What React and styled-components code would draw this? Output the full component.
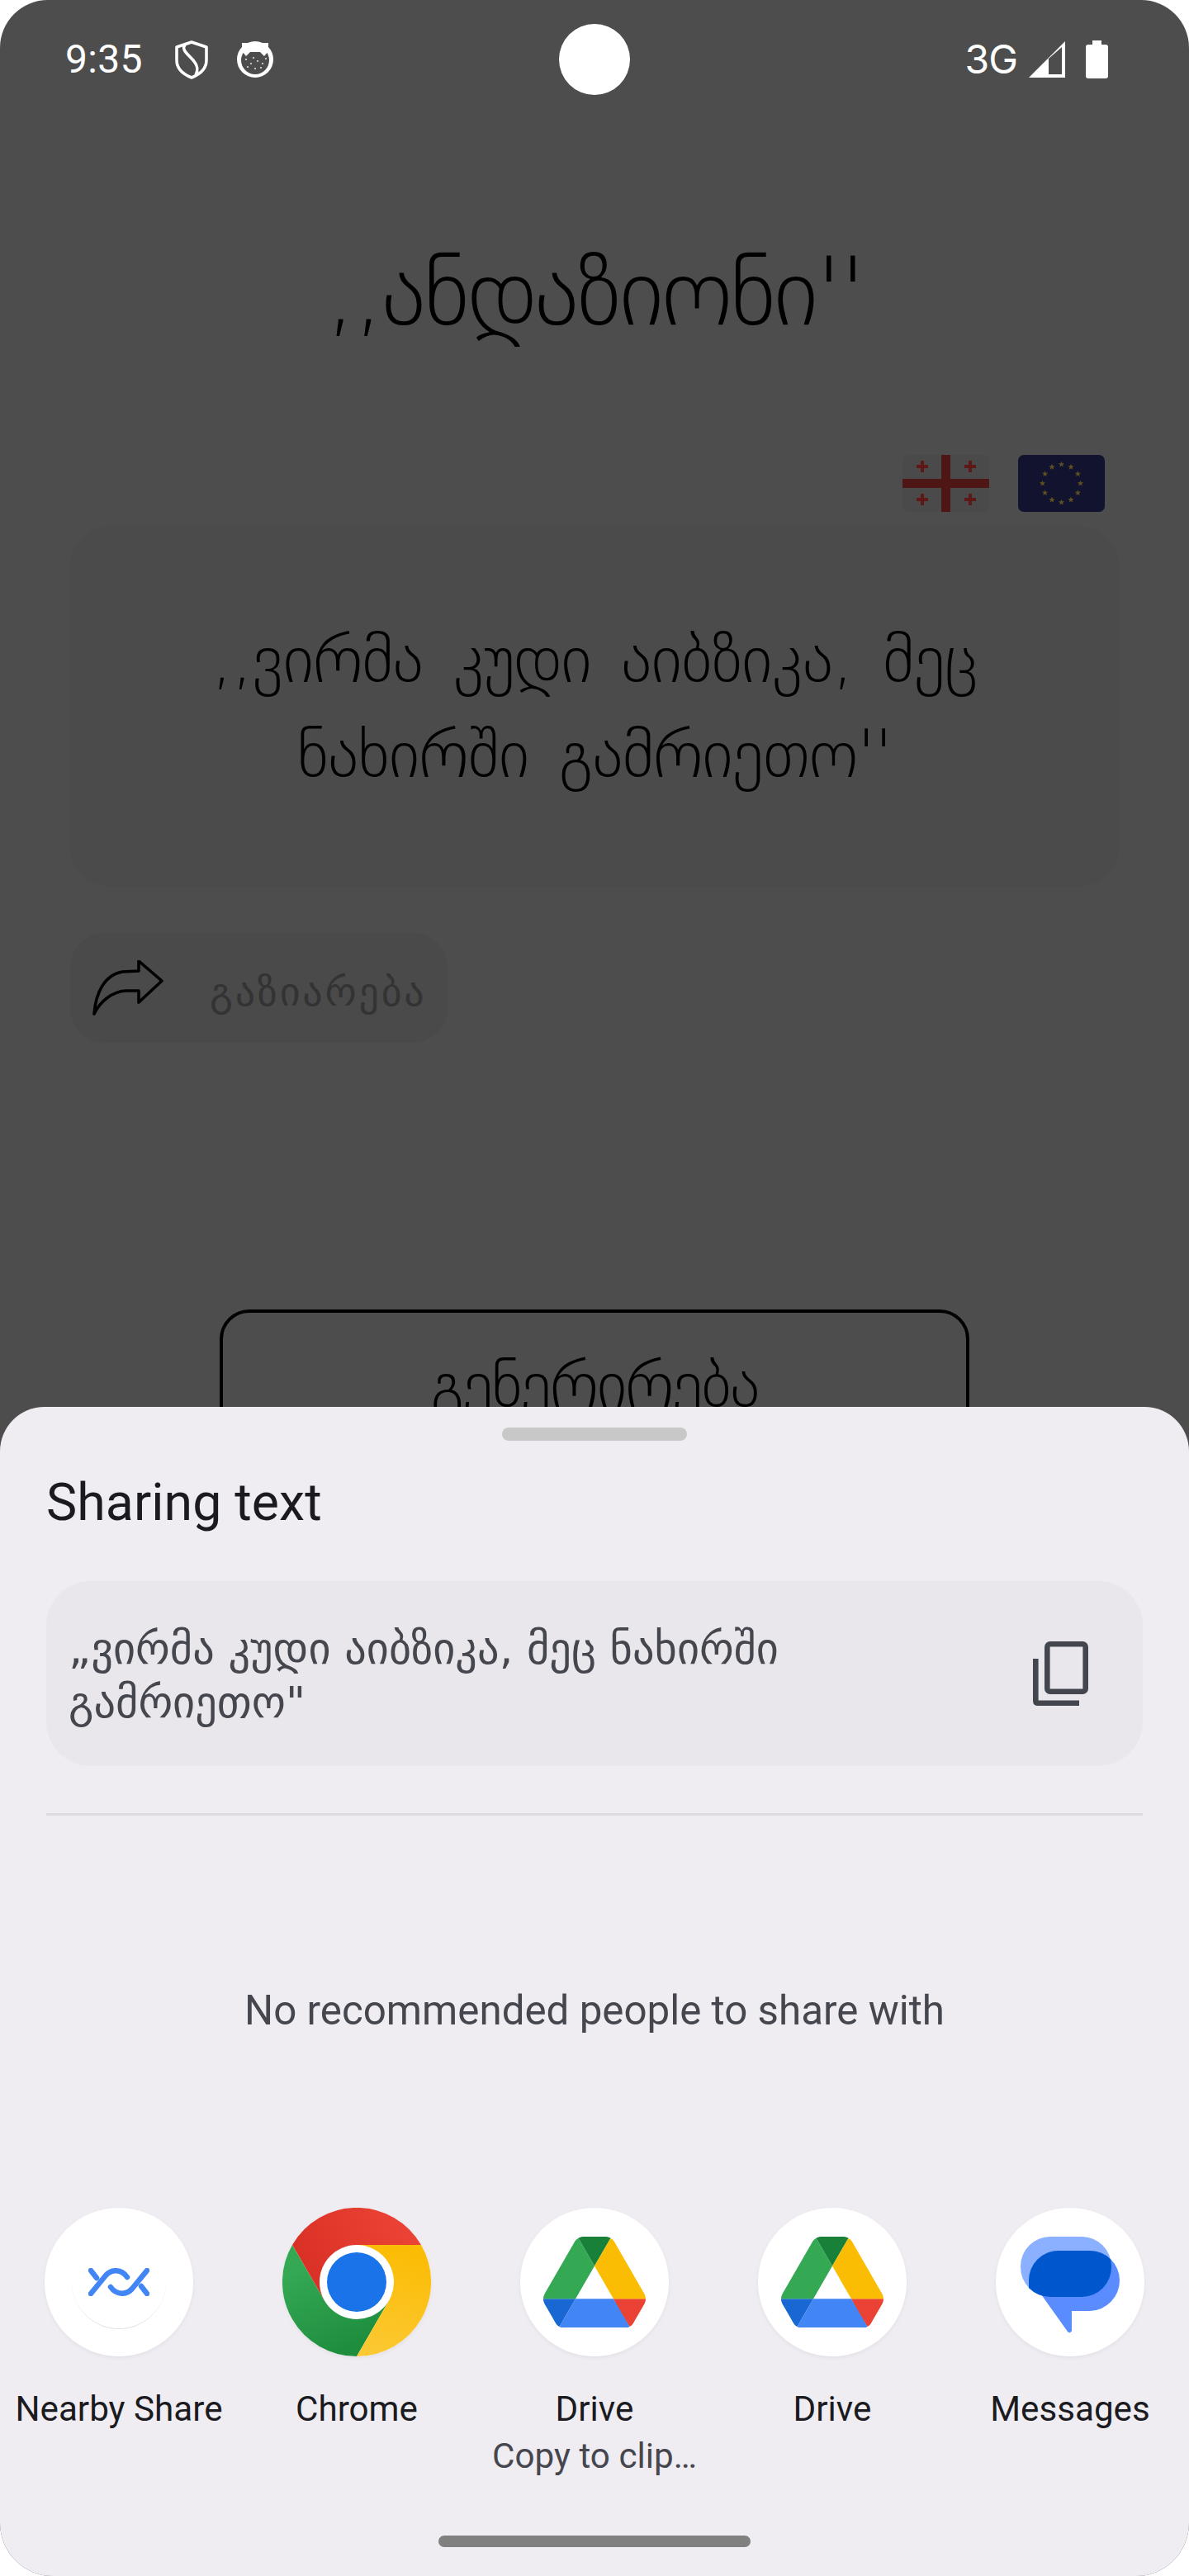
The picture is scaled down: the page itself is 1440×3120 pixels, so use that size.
import React from "react";
import styled, { createGlobalStyle } from "styled-components";

const Global = createGlobalStyle`
  html, body { margin: 0; padding: 0; background: #fff; }
  #root { width: 1440px; height: 3120px; }
`;
const georgian = `"DejaVu Sans", "Noto Sans", sans-serif`;

const Screen = styled.div`
  position: relative; width: 1440px; height: 3120px; overflow: hidden;
  background: #4d4d4d; border-radius: 58px 58px 64px 64px;
  font-family: Roboto, sans-serif;
`;
const StatusBar = styled.div`
  display: grid; grid-template-columns: 598px 86px 1fr; align-items: center;
  height: 86px; padding: 29px 98px 0 79px; color: #fff;
`;
const StatusLeft = styled.div`display: flex; align-items: center;`;
const StatusRight = styled.div`display: flex; align-items: center; justify-content: flex-end;`;
const Time = styled.span`font-size: 48px; line-height: 1; width: 133px; letter-spacing: .3px;`;
const NetLabel = styled.span`font: 400 48px/1 Inter, Roboto, sans-serif; margin-right: 14px; letter-spacing: -1px;`;
const Camera = styled.div`width: 86px; height: 86px; border-radius: 50%; background: #fff;`;

const Title = styled.h1`
  margin: 164px 0 0; text-align: center; font: 200 116px/150px ${georgian};
  color: #000; height: 150px; letter-spacing: -3px;
`;
const Flags = styled.div`
  display: flex; justify-content: flex-end; gap: 35px; padding-right: 102px; margin-top: 122px;
`;
const Flag = styled.svg`width: 105px; height: 69px; display: block; border-radius: 7px;`;
const QuoteCard = styled.div`
  margin: 17px 84px 0; height: 437px; border-radius: 52px; background: #4b4b4b;
  display: flex; align-items: center; justify-content: center; text-align: center;
  padding: 0 100px; box-sizing: border-box;
`;
const QuoteText = styled.p`
  margin: 0; font: 200 80px/115px ${georgian}; color: #000; letter-spacing: -1px; word-spacing: 12px;
`;
const SharePill = styled.div`
  margin: 56px 0 0 85px; width: 457px; height: 133px; border-radius: 42px; background: #4a4a4a;
  display: flex; align-items: center; gap: 56px; padding-left: 27px; box-sizing: border-box;
`;
const ShareLabel = styled.span`
  font: 400 48px/1 ${georgian}; color: #333; letter-spacing: 2.8px; white-space: nowrap; margin-top: 8px;
`;
const GenerateButton = styled.div`
  margin: 323px 0 0 266px; width: 908px; height: 230px; box-sizing: border-box;
  border: 4px solid #000; border-radius: 36px; display: flex; justify-content: center;
  font: 200 78px/1 ${georgian}; color: #000; padding-top: 48px; letter-spacing: -2px;
`;

const Sheet = styled.div`
  position: absolute; left: 0; right: 0; bottom: 0; height: 1416px; box-sizing: border-box;
  background: #efedf2; border-radius: 54px 54px 0 0; display: flex; flex-direction: column; align-items: stretch;
`;
const Handle = styled.div`
  width: 224px; height: 16px; border-radius: 8px; background: #c8c8c8; align-self: center; margin-top: 25px;
`;
const SheetTitle = styled.div`
  margin: 40px 0 0 56px; font-size: 62.6px; line-height: 70px; color: #1b1b1f; letter-spacing: .1px;
`;
const PreviewCard = styled.div`
  margin: 60px 56px 0; height: 224px; box-sizing: border-box; border-radius: 54px; background: #e9e7ec;
  display: flex; align-items: center; justify-content: space-between; padding: 0 66px 0 27px;
`;
const PreviewText = styled.div`
  width: 900px; padding-top: 3px; font: 400 52.4px/65px ${georgian}; color: #46464f;
`;
const Divider = styled.div`height: 3px; background: #dcdbe0; margin: 57px 56px 0;`;
const Empty = styled.div`
  margin-top: 208px; text-align: center; font-size: 49.3px; line-height: 56px; color: #46464f;
`;
const Apps = styled.div`
  display: grid; grid-template-columns: repeat(5, 288px); margin-top: 211px;
`;
const AppCell = styled.div`display: flex; flex-direction: column; align-items: center;`;
const AppIcon = styled.div`
  width: 180px; height: 180px; border-radius: 50%; background: #fff; display: flex;
  align-items: center; justify-content: center; position: relative;
  box-shadow: 0 2px 5px rgba(0,0,0,.05);
`;
const Faint = styled.div`
  position: absolute; left: 33px; top: 33px; width: 114px; height: 114px; border-radius: 50%;
  border-bottom: 1px solid #e4e4e4; box-sizing: border-box;
`;
const AppName = styled.div`
  margin-top: 36px; font-size: 42.2px; line-height: 56px; color: #1b1b1f; white-space: nowrap;
`;
const AppSub = styled.div`
  font-size: 42.2px; line-height: 58px; color: #46464f; white-space: nowrap;
`;
const HomeBar = styled.div`
  position: absolute; left: 531px; top: 1367px; width: 378px; height: 14px; border-radius: 7px; background: #808080;
`;

const GeoCross = ({ x, y }) => (
  <path d={`M${x - 2} ${y - 7}h4v5h5v4h-5v5h-4v-5h-5v-4h5z`} fill="#5e1818" />
);
const stars = Array.from({ length: 12 }, (_, i) => {
  const a = (i * Math.PI) / 6;
  return { x: 52.5 + 23 * Math.sin(a), y: 34.5 - 23 * Math.cos(a) };
});
const Star = ({ x, y }) => {
  const pts = [];
  for (let i = 0; i < 10; i++) {
    const r = i % 2 ? 1.6 : 3.8;
    const a = (i * Math.PI) / 5;
    pts.push(`${(x + r * Math.sin(a)).toFixed(2)},${(y - r * Math.cos(a)).toFixed(2)}`);
  }
  return <polygon points={pts.join(" ")} fill="#5f5022" />;
};

const apps = [
  { name: "Nearby Share", icon: "nearby" },
  { name: "Chrome", icon: "chrome", full: true },
  { name: "Drive", sub: "Copy to clip…", icon: "drive" },
  { name: "Drive", icon: "drive" },
  { name: "Messages", icon: "messages" },
];

const DriveIcon = () => (
  <svg width="124" height="110.8" viewBox="0 0 87.3 78">
    <path d="m6.6 66.85 3.85 6.65c.8 1.4 1.95 2.5 3.3 3.3l13.75-23.8h-27.5c0 1.55.4 3.1 1.2 4.5z" fill="#1967d2" />
    <path d="m43.65 25-13.75-23.8c-1.35.8-2.5 1.9-3.3 3.3l-25.4 44a9.06 9.06 0 0 0 -1.2 4.5h27.5z" fill="#34a853" />
    <path d="m73.55 76.8c1.35-.8 2.5-1.9 3.3-3.3l1.6-2.75 7.65-13.25c.8-1.4 1.2-2.95 1.2-4.5h-27.502l5.852 11.5z" fill="#ea4335" />
    <path d="m43.65 25 13.75-23.8c-1.35-.8-2.9-1.2-4.5-1.2h-18.5c-1.6 0-3.15.45-4.5 1.2z" fill="#188038" />
    <path d="m59.8 53h-32.3l-13.75 23.8c1.35.8 2.9 1.2 4.5 1.2h50.8c1.6 0 3.15-.45 4.5-1.2z" fill="#4285f4" />
    <path d="m73.4 26.5-12.7-22c-.8-1.4-1.95-2.5-3.3-3.3l-13.75 23.8 16.15 28h27.45c0-1.55-.4-3.1-1.2-4.5z" fill="#fbbc04" />
  </svg>
);
const ChromeIcon = () => (
  <svg width="180" height="180" viewBox="-90 -90 180 180" style={{ display: "block" }}>
    <defs>
      <linearGradient id="cr" x1="-60" y1="0" x2="60" y2="-60" gradientUnits="userSpaceOnUse">
        <stop offset="0" stopColor="#d93025" /><stop offset="1" stopColor="#ea4335" />
      </linearGradient>
      <linearGradient id="cg" x1="-60" y1="-20" x2="-10" y2="80" gradientUnits="userSpaceOnUse">
        <stop offset="0" stopColor="#34a853" /><stop offset="1" stopColor="#1e8e3e" />
      </linearGradient>
      <linearGradient id="cy" x1="50" y1="-40" x2="20" y2="90" gradientUnits="userSpaceOnUse">
        <stop offset="0" stopColor="#fbbc04" /><stop offset="1" stopColor="#fcc934" />
      </linearGradient>
    </defs>
    <path d="M-78 -45A90 90 0 0 1 78 -45H0L-39 22.5Z" fill="url(#cr)" />
    <path d="M-78 -45A90 90 0 0 0 0 90L39 22.5L-39 22.5Z" fill="url(#cg)" />
    <path d="M78 -45A90 90 0 0 1 0 90L39 22.5L0 -45Z" fill="url(#cy)" />
    <circle r="45" fill="#fff" />
    <circle r="36" fill="#1a73e8" />
  </svg>
);
const MessagesIcon = () => (
  <svg width="120" height="118" viewBox="0 0 120 118" style={{ marginTop: 8 }}>
    <defs>
      <clipPath id="lightClip"><rect width="110" height="73" rx="36" /></clipPath>
    </defs>
    <rect width="110" height="73" rx="36" fill="#8ab0ff" />
    <path d="M46 17H84A36 36 0 0 1 120 53A37 37 0 0 1 84 90H62V114Q60 118 57 115L20 63Q10 50 10 53A36 36 0 0 1 46 17Z" fill="#5a8cff" />
    <path d="M46 17H84A36 36 0 0 1 120 53V90H10V53A36 36 0 0 1 46 17Z" fill="#0057cd" clipPath="url(#lightClip)" />
  </svg>
);
const NearbyIcon = () => (
  <svg width="74" height="34" viewBox="0 0 74 34" fill="none" stroke="#4285f4" strokeWidth="6.5" strokeLinecap="round">
    <path d="M3 31L21 9C28 1 40 1 47 11" />
    <path d="M71 3L53 25C46 33 34 33 27 23" />
    <path d="M3 3L10 12" />
    <path d="M71 31L64 22" />
  </svg>
);

const renderIcon = (icon) => {
  if (icon === "chrome") return <ChromeIcon />;
  if (icon === "drive") return <DriveIcon />;
  if (icon === "messages") return <MessagesIcon />;
  return <><Faint /><NearbyIcon /></>;
};

export default function App() {
  return (
    <Screen>
      <Global />
      <StatusBar>
        <StatusLeft>
          <Time>9:35</Time>
          <svg width="40" height="47" viewBox="0 0 40 47" fill="none" stroke="#fff" strokeWidth="3.6">
            <path d="M20 2L38 8V24C38 34 30 41 20 45C10 41 2 34 2 24V8Z" strokeLinejoin="round" />
            <path d="M12 5C7 11 16 17 22 24C28 31 28 36 25 42" />
          </svg>
          <svg width="44" height="44" viewBox="0 0 44 44" style={{ marginLeft: 35 }}>
            <circle cx="22" cy="22" r="22" fill="#fff" />
            <circle cx="22" cy="23" r="17" fill="#4d4d4d" />
            <path d="M6 2H38V12L33 18L28 13H16L11 18L6 12Z" fill="#fff" />
            {[[11,22],[17,27],[25,24],[31,27],[13,31],[22,33],[29,32],[20,20],[35,21]].map(([x,y],i)=>(
              <circle key={i} cx={x} cy={y} r="1.1" fill="#ddd" />
            ))}
          </svg>
        </StatusLeft>
        <Camera />
        <StatusRight>
          <NetLabel>3G</NetLabel>
          <svg width="44" height="44" viewBox="0 0 44 44" style={{ marginRight: 25 }}>
            <path d="M0 44L44 0V44Z" fill="#fff" />
            <path d="M24 21L40 7V40H24Z" fill="#4d4d4d" />
          </svg>
          <svg width="27" height="46" viewBox="0 0 27 46">
            <path d="M8 0H19V5H24Q27 5 27 8V43Q27 46 24 46H3Q0 46 0 43V8Q0 5 3 5H8Z" fill="#fff" />
          </svg>
        </StatusRight>
      </StatusBar>

      <Title>,,ანდაზიონი''</Title>

      <Flags>
        <Flag viewBox="0 0 105 69">
          <rect width="105" height="69" fill="#4a4a4a" />
          <rect x="47" width="11" height="69" fill="#4f1616" />
          <rect y="29" width="105" height="11" fill="#4f1616" />
          <GeoCross x={24} y={14} /><GeoCross x={82} y={14} /><GeoCross x={24} y={54} /><GeoCross x={82} y={54} />
        </Flag>
        <Flag viewBox="0 0 105 69">
          <rect width="105" height="69" fill="#12142f" />
          {stars.map((s, i) => <Star key={i} x={s.x} y={s.y} />)}
        </Flag>
      </Flags>

      <QuoteCard>
        <QuoteText>,,ვირმა კუდი აიბზიკა, მეც ნახირში გამრიეთო''</QuoteText>
      </QuoteCard>

      <SharePill>
        <svg width="86" height="67" viewBox="0 0 86 67" fill="none" stroke="#000" strokeWidth="3.6" strokeLinejoin="round">
          <path d="M2 65C4 40 14 18 36 14L56 13V1L84 25L56 51V37H40C24 38 9 50 2 65Z" />
        </svg>
        <ShareLabel>გაზიარება</ShareLabel>
      </SharePill>

      <GenerateButton>გენერირება</GenerateButton>

      <Sheet>
        <Handle />
        <SheetTitle>Sharing text</SheetTitle>
        <PreviewCard>
          <PreviewText>„ვირმა კუდი აიბზიკა, მეც ნახირში გამრიეთო"</PreviewText>
          <svg width="67" height="78" viewBox="0 0 67 78" fill="none" stroke="#44464f" strokeWidth="6.6">
            <rect x="17.3" y="3.3" width="46.4" height="57.4" rx="3.5" />
            <path d="M3.3 21V72Q3.3 74.7 6 74.7H56" />
          </svg>
        </PreviewCard>
        <Divider />
        <Empty>No recommended people to share with</Empty>
        <Apps>
          {apps.map((a, i) => (
            <AppCell key={i}>
              <AppIcon>{renderIcon(a.icon)}</AppIcon>
              <AppName>{a.name}</AppName>
              {a.sub && <AppSub>{a.sub}</AppSub>}
            </AppCell>
          ))}
        </Apps>
        <HomeBar />
      </Sheet>
    </Screen>
  );
}
